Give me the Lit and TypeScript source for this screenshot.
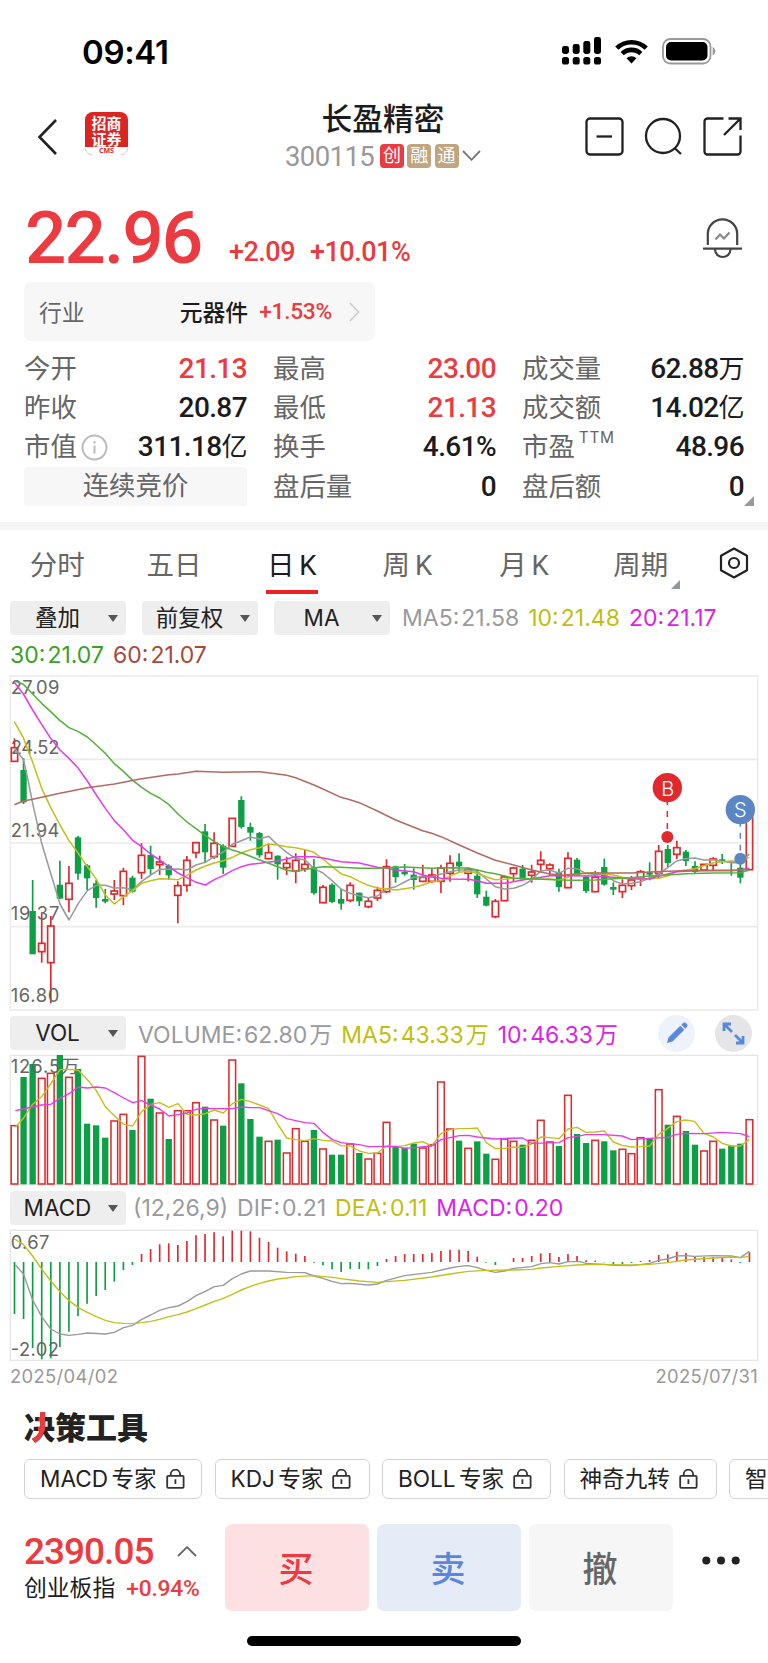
import { LitElement, html, svg, css } from "lit";
import { customElement } from "lit/decorators.js";
import { classMap } from "lit/directives/class-map.js";

// Chart geometry is kept in thirds of a CSS pixel.
const STEP = 27.22;
const X0 = 43.5;
const cx = (i: number) => X0 + STEP * i;

const RED = "#e0292c";
const GREEN = "#0d9f45";

// direction, body top, body bottom, high, low
type Candle = [string, number, number, number, number];
const candles: Candle[] = [
  ["R", 233, 274, 205, 274], ["G", 301, 396, 264, 402], ["G", 724, 852, 630, 852], ["R", 820, 845, 730, 878],
  ["R", 768, 878, 738, 1000], ["G", 645, 685, 572, 687], ["R", 640, 688, 588, 727], ["G", 503, 610, 498, 629],
  ["G", 587, 624, 583, 660], ["G", 641, 683, 630, 713], ["G", 688, 694, 657, 700], ["R", 663, 672, 630, 690],
  ["R", 604, 677, 593, 705], ["G", 624, 664, 617, 668], ["R", 556, 608, 520, 627], ["G", 556, 596, 527, 614],
  ["R", 576, 584, 557, 615], ["G", 588, 615, 583, 630], ["R", 647, 676, 634, 760], ["R", 571, 646, 558, 665],
  ["R", 518, 548, 518, 565], ["G", 485, 546, 462, 578], ["R", 520, 560, 487, 566], ["G", 528, 592, 523, 612],
  ["R", 445, 529, 445, 529], ["G", 391, 470, 379, 476], ["G", 472, 487, 458, 512], ["G", 490, 555, 486, 563],
  ["R", 548, 566, 520, 568], ["G", 558, 582, 556, 629], ["R", 580, 593, 560, 615], ["R", 571, 603, 550, 640],
  ["R", 583, 596, 537, 605], ["G", 594, 668, 567, 674], ["R", 652, 698, 645, 700], ["G", 645, 695, 640, 700],
  ["G", 688, 700, 657, 719], ["R", 646, 691, 637, 697], ["G", 669, 693, 668, 708], ["R", 694, 710, 684, 715],
  ["R", 661, 684, 650, 693], ["R", 590, 665, 568, 669], ["G", 590, 620, 587, 638], ["G", 606, 612, 582, 617],
  ["G", 615, 629, 595, 659], ["R", 622, 634, 584, 637], ["R", 615, 634, 595, 640], ["R", 594, 634, 584, 669],
  ["R", 580, 610, 556, 635], ["G", 576, 588, 550, 605], ["R", 598, 610, 593, 634], ["G", 618, 672, 598, 684],
  ["G", 681, 706, 662, 709], ["R", 694, 740, 687, 745], ["R", 621, 692, 616, 694], ["R", 594, 611, 590, 635],
  ["G", 597, 627, 585, 631], ["R", 606, 616, 584, 638], ["R", 571, 583, 544, 605], ["R", 585, 596, 580, 618],
  ["G", 607, 650, 596, 665], ["R", 565, 653, 547, 655], ["G", 570, 615, 564, 618], ["G", 621, 662, 618, 669],
  ["R", 622, 665, 603, 667], ["G", 592, 643, 566, 647], ["G", 652, 658, 637, 675], ["R", 646, 665, 628, 684],
  ["R", 630, 647, 618, 660], ["R", 605, 625, 600, 648], ["G", 608, 613, 577, 631], ["R", 544, 610, 525, 624],
  ["G", 538, 578, 525, 592], ["R", 533, 553, 512, 567], ["G", 546, 572, 540, 588], ["G", 589, 605, 574, 609],
  ["R", 583, 600, 583, 600], ["R", 567, 586, 562, 600], ["G", 569, 574, 552, 582], ["G", 574, 578, 572, 617],
  ["G", 594, 622, 566, 640], ["R", 420, 599, 416, 599],
];

const volumes = [
  347, 202, 163, 205, 190, 136, 202, 178, 342, 347, 384, 333, 313, 361, 139, 267, 309, 388, 302, 302, 278,
  291, 330, 348, 150, 221, 328, 381, 394, 390, 429, 356, 394, 361, 417, 435, 435, 402, 430, 447, 430, 337,
  411, 414, 402, 414, 404, 216, 357, 393, 415, 395, 432, 448, 387, 394, 405, 391, 331, 396, 409, 256, 373,
  400, 391, 395, 422, 418, 431, 383, 385, 239, 345, 319, 364, 405, 423, 394, 417, 408, 402, 329,
];

const macd = [
  387, 402, 489, 523, 520, 486, 440, 394, 356, 333, 315, 290, 255, 240, 207, 192, 178, 175, 180, 168, 151,
  147, 142, 154, 137, 137, 139, 158, 171, 188, 199, 206, 213, 233, 241, 253, 261, 252, 252, 253, 243, 222,
  213, 207, 207, 207, 204, 198, 194, 194, 198, 215, 233, 240, 231, 219, 219, 213, 205, 204, 216, 207, 213,
  226, 227, 232, 238, 237, 234, 228, 225, 210, 208, 200, 204, 213, 216, 216, 219, 223, 234, 202,
];

// volume direction per bar
const volDir =
  "RGGRRGRGGGGRRGRGRGRRRGRGRGGGRGRRRGRGGRGRRRGGGRRRRGRGGRRRGRRRGRGGRGGRRRGRGRGGRRGGGR";

const priceLines: [string, string][] = [
  ["#999a9e", "43,235 70,268 84,330 98,400 125,520 152,610 180,702 207,750 235,700 262,662 289,646 316,646 343,654 371,653 398,660 425,634 452,615 479,598 507,598 534,597 561,600 588,585 616,577 643,560 670,546 697,523 724,512 751,501 779,507 806,499 833,525 860,547 887,565 915,570 942,596 969,609 996,632 1023,657 1050,670 1078,677 1105,683 1132,678 1160,657 1187,650 1214,636 1241,622 1268,620 1295,620 1323,612 1350,605 1378,600 1405,600 1432,604 1459,627 1486,650 1514,657 1541,655 1568,646 1595,630 1623,602 1650,600 1677,610 1704,595 1731,596 1758,610 1786,614 1813,612 1840,632 1867,642 1894,640 1922,635 1949,624 1976,612 2003,593 2030,573 2057,566 2084,564 2112,570 2140,569 2167,574 2194,578 2221,578 2248,552"],
  ["#c3c01c", "43,155 70,203 98,277 125,355 152,412 180,465 207,512 235,550 262,590 289,628 316,675 343,702 371,680 398,662 425,640 452,632 479,626 507,627 534,629 561,616 588,600 616,588 643,579 670,572 697,562 724,549 751,539 779,533 806,522 833,525 860,530 887,533 915,539 942,547 969,567 996,590 1023,611 1050,620 1078,634 1105,646 1132,654 1160,657 1187,660 1214,656 1241,652 1268,645 1295,635 1323,632 1350,618 1378,607 1405,604 1432,610 1459,620 1486,629 1514,628 1541,624 1595,628 1650,627 1677,630 1704,622 1731,612 1758,608 1786,608 1813,612 1840,615 1867,622 1894,624 1922,627 1976,625 2003,618 2030,604 2084,596 2112,587 2140,578 2167,575 2194,573 2221,574 2248,562"],
  ["#e43cea", "43,37 70,72 98,120 125,163 152,205 180,240 207,265 235,295 262,333 289,375 316,415 343,452 371,480 398,511 425,530 452,552 479,570 507,590 534,609 561,623 588,637 616,645 643,629 670,617 697,602 724,590 751,583 779,580 833,573 860,567 887,560 942,560 969,564 1023,575 1078,579 1132,592 1160,595 1187,600 1241,605 1268,615 1295,621 1323,625 1350,627 1405,628 1432,632 1459,640 1514,640 1568,630 1623,622 1650,617 1704,617 1786,618 1840,622 1894,627 1949,626 1976,619 2003,612 2030,605 2084,602 2194,602 2221,600 2248,594"],
  ["#55b03c", "43,32 70,43 98,72 125,100 152,125 180,152 207,173 235,185 262,201 289,225 316,250 343,281 371,305 398,331 425,352 452,370 479,384 507,404 534,432 561,456 588,476 616,497 643,515 670,530 697,540 724,548 751,559 779,570 806,580 833,590 860,601 887,605 915,598 942,594 969,590 1023,592 1078,595 1132,595 1214,591 1295,595 1350,593 1405,594 1432,600 1459,607 1486,611 1514,618 1541,625 1595,626 1677,630 1731,631 1786,630 1840,626 1894,623 1949,618 2003,615 2057,611 2140,609 2221,608 2248,600"],
  ["#b36a60", "43,404 70,393 98,388 125,382 152,376 180,370 262,353 343,342 425,326 507,314 534,312 588,304 670,307 779,305 833,312 860,316 887,323 942,345 969,357 1023,382 1050,389 1078,398 1132,423 1187,450 1268,482 1295,490 1323,500 1378,525 1432,549 1486,571 1541,585 1595,600 1650,612 1690,616 1731,611 1786,609 1895,609 1949,606 2003,604 2057,602 2140,601 2194,601 2221,600 2248,598"],
];

const volLines: [string, string][] = [
  ["#c3c01c", "46,352 70,325 98,283 125,260 152,222 180,179 207,178 235,181 262,209 289,242 316,290 343,317 371,343 398,348 425,305 452,283 479,278 507,292 534,281 561,313 588,315 616,311 643,300 670,309 697,281 724,268 751,275 779,285 806,296 833,342 860,384 887,389 915,392 942,386 969,391 996,393 1023,407 1050,408 1078,423 1105,430 1132,429 1160,408 1187,410 1214,407 1241,399 1268,395 1295,408 1323,371 1350,359 1378,356 1405,356 1432,354 1459,398 1486,416 1514,415 1541,411 1568,412 1595,402 1623,381 1650,383 1677,386 1704,357 1731,352 1758,367 1786,366 1813,363 1840,396 1867,406 1894,411 1922,410 1949,408 1976,373 2003,355 2030,335 2057,330 2084,334 2112,370 2140,381 2167,400 2194,408 2221,408 2248,388"],
  ["#e43cea", "46,302 70,297 98,291 125,285 152,283 180,265 207,251 235,231 262,234 289,231 316,234 343,248 371,264 398,278 425,272 452,285 479,297 507,318 534,314 561,309 588,298 616,295 697,296 724,291 751,293 779,293 806,302 833,311 860,326 915,338 942,340 969,367 996,388 1023,398 1050,401 1078,404 1105,410 1160,409 1187,409 1214,415 1241,413 1295,408 1323,389 1350,383 1378,377 1405,376 1432,381 1486,387 1514,385 1568,384 1595,400 1677,398 1704,383 1731,379 1758,374 1813,374 1867,378 1894,389 1949,385 2003,382 2030,373 2057,370 2112,371 2167,367 2221,371 2248,380"],
];

const macdLines: [string, string][] = [
  ["#999a9e", "46,240 70,266 98,345 125,395 152,432 180,447 207,451 235,448 262,444 316,447 343,442 371,428 398,421 425,403 452,390 479,376 507,368 534,363 561,350 588,332 616,319 643,305 670,301 697,281 724,267 751,258 806,258 860,262 915,263 942,273 969,280 996,289 1023,296 1050,295 1105,300 1132,297 1160,286 1214,272 1295,262 1350,249 1378,244 1405,242 1432,248 1459,256 1486,262 1514,258 1541,250 1595,245 1623,236 1650,233 1677,237 1704,230 1740,230 1758,235 1813,238 1840,241 1894,242 1949,235 1976,226 2003,222 2030,213 2057,212 2084,214 2140,212 2194,213 2221,218 2248,199"],
  ["#c3c01c", "43,162 70,178 98,213 125,252 152,288 180,320 207,347 235,368 262,382 289,395 316,406 343,413 371,415 398,416 425,413 452,409 479,403 507,395 534,389 561,381 588,371 616,360 643,349 670,340 697,328 724,315 751,304 779,295 806,288 833,282 860,279 887,275 942,272 996,277 1023,281 1078,288 1132,292 1160,290 1214,286 1295,276 1350,267 1405,259 1459,256 1541,255 1595,253 1623,249 1677,244 1731,240 1786,238 1840,239 1894,240 1949,238 2003,233 2057,225 2140,219 2194,216 2221,218 2248,214"],
];

const curves = (lines: [string, string][]) =>
  lines.map(([c, p]) => svg`<polyline class="curve" points=${p} stroke=${c} />`);

@customElement("price-chart")
class PriceChart extends LitElement {
  static styles = css`
    :host { display: block; height: 340px; }
    svg { display: block; width: 768px; height: 340px; }
    .curve { fill: none; stroke-width: 4.6; stroke-linejoin: round; }
    .label { font: 400 55px Inter, sans-serif; fill: #666; }
    .pin { font: 300 60px Inter, sans-serif; fill: #fff; text-anchor: middle; }
  `;
  render() {
    return html`<svg viewBox="0 12 2304 1020">
      <g stroke="#ececec" stroke-width="5" fill="none">
        <path d="M31 268H2273M31 519H2273M31 770H2273" />
        <rect x="31" y="18" width="2242" height="1002" />
      </g>
      ${candles.map(([d, t, b, h, l], i) => {
        const x = cx(i);
        return d === "R"
          ? svg`<path d="M${x} ${h}V${t}M${x} ${b}V${l}" stroke=${RED} stroke-width="5" />
              <rect x=${x - 9.5} y=${t} width="19" height=${Math.max(4, b - t)} fill="none" stroke=${RED} stroke-width="5" />`
          : svg`<path d="M${x} ${h}V${l}" stroke=${GREEN} stroke-width="5" />
              <rect x=${x - 9.5} y=${t - 1} width="19" height=${b - t + 2} fill=${GREEN} />`;
      })}
      ${[["27.09", 72], ["24.52", 253], ["21.94", 501], ["19.37", 749], ["16.80", 995]].map(
        ([s, y]) => svg`<text class="label" x="32" y=${y} textLength="146">${s}</text>`
      )}
      ${curves(priceLines)}
      <path d="M2002 395V480" stroke=${RED} stroke-width="4.5" stroke-dasharray="18 18" stroke-dashoffset="8" />
      <circle cx="2002" cy="353" r="44" fill=${RED} />
      <circle cx="2002" cy="501" r="18" fill=${RED} />
      <text class="pin" x="2003" y="377">B</text>
      <path d="M2221 460V548" stroke="#5b86c4" stroke-width="4.5" stroke-dasharray="18 18" stroke-dashoffset="8" />
      <circle cx="2221" cy="419" r="44" fill="#5b86c4" />
      <circle cx="2221" cy="566" r="18" fill="#5b86c4" />
      <text class="pin" x="2221" y="440">S</text>
    </svg>`;
  }
}

@customElement("volume-chart")
class VolumeChart extends LitElement {
  static styles = css`
    :host { display: block; height: 134px; margin: 3px 0 4px; }
    svg { display: block; width: 768px; height: 134px; }
    .curve { fill: none; stroke-width: 4.2; stroke-linejoin: round; }
    .label { font: 400 55px Inter, "Noto Sans CJK SC", sans-serif; fill: #666; }
  `;
  render() {
    return html`<svg viewBox="0 129 2304 402">
      <rect x="31" y="136" width="2242" height="388" stroke="#e6e6e6" stroke-width="4" fill="none" />
      ${volumes.map((t, i) => {
        const x = cx(i);
        return candles[i][0] === "R"
          ? svg`<rect x=${x - 10} y=${t} width="20" height=${522 - t} fill="none" stroke=${RED} stroke-width="4.6" />`
          : svg`<rect x=${x - 9.5} y=${t - 1} width="19" height=${524 - t} fill=${GREEN} />`;
      })}
      <text class="label" x="32" y="190" textLength="206">126.5万</text>
      ${curves(volLines)}
    </svg>`;
  }
}

@customElement("macd-chart")
class MacdChart extends LitElement {
  static styles = css`
    :host { display: block; height: 134px; margin-top: 3px; }
    svg { display: block; width: 768px; height: 134px; }
    .curve { fill: none; stroke-width: 4.2; stroke-linejoin: round; }
    .label { font: 400 55px Inter, sans-serif; fill: #666; }
  `;
  render() {
    return html`<svg viewBox="0 129 2304 402">
      <rect x="31" y="136" width="2242" height="390" stroke="#e6e6e6" stroke-width="4" fill="none" />
      ${macd.map((v, i) => svg`<path d="M${cx(i)} 231V${v}" stroke=${v < 231 ? RED : GREEN} stroke-width="5" />`)}
      <text class="label" x="32" y="191" textLength="116">0.67</text>
      <text class="label" x="32" y="514" textLength="145">-2.02</text>
      ${curves(macdLines)}
    </svg>`;
  }
}

const lock = html`<svg class="lock" width="19" height="20" viewBox="0 0 19 20" fill="none" stroke="#333" stroke-width="1.8">
  <rect x="1.2" y="6.8" width="16.4" height="12" rx="1" />
  <path d="M4.7 6.5V5.4a4.7 4.7 0 0 1 9.4 0V6.5M9.4 10.3V15" />
</svg>`;

@customElement("app-root")
class AppRoot extends LitElement {
  static styles = css`
    :host {
      display: block; width: 768px; height: 1663px; overflow: hidden; background: #fff; color: #1c1c1e;
      font-family: Roboto, "Noto Sans CJK SC", sans-serif;
    }
    * { box-sizing: border-box; }
    svg { display: block; flex: none; }
    .page { display: flex; flex-direction: column; height: 1663px; white-space: nowrap; }
    .red { color: #eb3a40; }
    .status { height: 92px; display: flex; align-items: center; padding: 10px 51px 0 82px; justify-content: space-between; }
    .clock { font: 600 33px/40px Inter, sans-serif; color: #000; letter-spacing: -0.35px; padding-top: 1px; }
    .sysicons { display: flex; align-items: center; gap: 14px; }
    .nav { height: 97px; display: grid; grid-template-columns: 260px 246px 262px; }
    .nav-left { display: flex; gap: 28px; padding: 20px 0 0 37px; align-items: flex-start; }
    .back { margin-top: 7px; }
    .logo { width: 43px; height: 43px; border-radius: 8px; background: #da2522; overflow: hidden; display: flex; flex-direction: column; align-items: center; box-shadow: 0 0 1px #ccc; }
    .logo-text { font: 700 15px/15.5px "Noto Sans CJK SC", sans-serif; color: #fff; padding-top: 3px; height: 36px; width: 31px; text-align: center; white-space: normal; }
    .logo-cms { width: 100%; height: 8px; background: #fff; color: #da2522; font: 700 7px/7px "Open Sans", sans-serif; text-align: center; }
    .title { display: flex; flex-direction: column; align-items: center; padding-top: 6px; }
    .name { font: 500 30.7px/37px "Noto Sans CJK SC", sans-serif; height: 39px; }
    .code-row { display: flex; align-items: center; height: 37px; width: 196px; }
    .code { font-size: 27.5px; color: #999; letter-spacing: -0.6px; width: 95px; margin-top: 1px; }
    .tag { width: 24px; height: 24px; border-radius: 4px; background: #c0a57f; color: #fff; font-size: 18px; line-height: 23px; text-align: center; margin-right: 3.4px; }
    .tag.hot { background: #eb3a40; }
    .nav-right { display: flex; gap: 20px; padding: 25px 26px 0 0; justify-content: flex-end; align-items: flex-start; }
    .quote { height: 93px; display: flex; align-items: flex-end; padding: 0 26px 0 25px; }
    .price { font-size: 73px; font-weight: 500; line-height: 88px; letter-spacing: -2px; width: 204px; }
    .chg { font-size: 27px; font-weight: 500; line-height: 32px; letter-spacing: -0.5px; padding-bottom: 14px; }
    .chg + .chg { margin-left: 15px; }
    .bell { margin: 0 0 23px auto; }
    .industry { margin: 0 0 8px 24px; width: 351px; height: 59px; border-radius: 7px; background: #f7f7f7; display: flex; align-items: center; padding: 0 15px 0 15px; font-size: 22.8px; }
    .grey { color: #666; }
    .ind-name { margin-left: auto; font-weight: 500; }
    .ind-chg { margin: 0 17px 0 11px; font-weight: 500; letter-spacing: -0.3px; }
    .stats { height: 173px; padding: 0 24px; display: grid; grid-template-columns: 223px 223px 222px; column-gap: 26px; grid-template-rows: repeat(4, 39.3px); position: relative; }
    .cell { display: flex; justify-content: space-between; align-items: center; font-size: 26.4px; color: #666; line-height: 38px; }
    .val { font-size: 28px; font-weight: 500; color: #1c1c1e; letter-spacing: -0.6px; }
    .val.red { color: #eb3a40; }
    .unit { font-size: 26px; font-weight: 400; }
    .lbl { display: flex; align-items: center; }
    .info { margin-left: 4px; }
    .ttm { font: 400 15.5px/16px Inter, sans-serif; align-self: flex-start; margin: 2px 0 0 4px; letter-spacing: 0.6px; }
    .auction { background: #f7f7f7; border-radius: 4px; justify-content: center; padding-bottom: 2px; }
    .corner { width: 0; height: 0; border-left: 10px solid transparent; border-bottom: 10px solid #999; position: absolute; right: 14px; bottom: 16px; }
    .band { height: 8px; background: #f5f5f5; }
    .tabs { height: 71px; display: grid; grid-template-columns: repeat(6, 116.7px) 68px; align-items: stretch; }
    .tab { display: flex; align-items: center; justify-content: center; font-size: 27.5px; color: #666; position: relative; word-spacing: -2px; padding: 0 2px 5px 0; }
    .tab.on { color: #1c1c1e; padding-right: 0; }
    .tab.on::after { content: ""; position: absolute; bottom: 7px; width: 52px; height: 4px; background: #ed2024; }
    .tab.more::after { content: ""; position: absolute; left: 88px; bottom: 12px; border-left: 9px solid transparent; border-bottom: 9px solid #9296a0; }
    .hex { align-self: center; margin-left: 19px; margin-bottom: 6px; }
    .legend { height: 34px; flex: none; display: flex; align-items: center; padding-left: 10px; font-family: Inter, "Noto Sans CJK SC", sans-serif; font-size: 23px; word-spacing: -4.4px; }
    .legend.two { height: 39px; padding-left: 10px; }
    .legend.vol { margin-top: 2px; }
    .drop { width: 116px; height: 34px; border-radius: 4px; background: #eee; display: grid; grid-template-columns: 95px 21px; align-items: center; text-align: center; color: #222; font-size: 22.5px; line-height: 32px; }
    .drop + .drop { margin-left: 16px; }
    .arrow { border: 5px solid transparent; border-top: 7px solid #555; border-bottom: 0; width: 10px; margin-left: 3px; }
    .it { margin-left: 9px; }
    .drop + .it { margin-left: 12px; }
    .drop + .param { margin-left: 7px; }
    .ma5 { color: #999a9e; } .ma10 { color: #c0be10; } .ma20 { color: #dd22e6; } .ma30 { color: #3ba024; } .ma60 { color: #a44a3e; }
    .round { width: 37px; height: 37px; border-radius: 50%; display: flex; align-items: center; justify-content: center; background: #edf2fb; }
    .round.dark { background: #e5e5e7; margin-left: 20px; }
    .tools { margin-left: auto; margin-right: 16px; display: flex; }
    .dates { height: 28px; padding: 0 10px; display: flex; justify-content: space-between; align-items: center; font: 400 18.4px/20px Inter, sans-serif; color: #999; letter-spacing: 0.35px; }
    .heading { margin: 17px 0 14px 24px; width: 130px; height: 38px; font: 900 31px/38px "Noto Sans CJK SC", sans-serif; color: #222; position: relative; }
    .heading::after { content: "决"; color: #eb3a40; position: absolute; left: 0; top: 0; clip-path: polygon(15px 0, 21px 0, 21px 23px, 19px 27px, 14px 37px, 6px 37px, 6px 31px, 14px 25px); }
    .chips { height: 40px; flex: none; display: flex; padding-left: 24px; gap: 12.5px; overflow: hidden; }
    .chip { flex: none; height: 40px; border: 1.5px solid #d3d3d3; border-radius: 6px; display: flex; align-items: center; padding-left: 15px; gap: 9px; font: 400 22.6px/38px Inter, "Noto Sans CJK SC", sans-serif; color: #222; word-spacing: -3px; }
    .w1 { width: 178px; } .w2 { width: 155px; } .w3 { width: 169px; } .w4 { width: 153px; }
    .bottom { margin-top: 25px; height: 87px; flex: none; display: flex; padding-left: 24px; }
    .index { width: 201px; padding-top: 6px; }
    .idx-top { display: flex; align-items: center; height: 43px; }
    .idx { font-size: 37px; font-weight: 500; letter-spacing: -1px; width: 153px; }
    .idx-sub { font-size: 22.8px; line-height: 34px; margin-top: -1px; display: flex; }
    .idx-sub .red { font-weight: 500; margin-left: 11px; letter-spacing: -0.2px; }
    .act { width: 144px; height: 87px; border-radius: 7px; display: flex; align-items: center; justify-content: center; font-size: 35px; font-weight: 500; margin-right: 8px; padding: 0 2px 2px 0; }
    .buy { background: #fce0e2; color: #eb3a40; } .sell { background: #e5ecf8; color: #5a87dd; } .cancel { background: #f6f6f6; color: #666; }
    .dots { margin: 32px 0 0 21px; }
    .home { width: 274px; height: 10px; border-radius: 5px; background: #000; margin: 25px auto 0; }
  `;

  private stat(label: unknown, value: string, unit = "", up = false) {
    return html`<div class="cell"><span class="lbl">${label}</span>
      <span class=${classMap({ val: true, red: up })}>${value}${unit ? html`<span class="unit">${unit}</span>` : ""}</span></div>`;
  }
  private drop(text: string) {
    return html`<div class="drop"><span>${text}</span><i class="arrow"></i></div>`;
  }

  render() {
    return html`<div class="page">
      <div class="status">
        <span class="clock">09:41</span>
        <div class="sysicons">
          <svg width="39" height="28" viewBox="0 0 39 28">
            <rect x="0" y="9" width="7" height="8" rx="2.4"/><rect x="10.7" y="7" width="7" height="10" rx="2.4"/><rect x="21.3" y="4" width="7" height="13" rx="2.4"/><rect x="32" y="0" width="7" height="17" rx="2.4"/>
            <rect x="0" y="20" width="7" height="7.5" rx="2.6"/><rect x="10.7" y="20" width="7" height="7.5" rx="2.6"/><rect x="21.3" y="20" width="7" height="7.5" rx="2.6"/><rect x="32" y="20" width="7" height="7.5" rx="2.6"/>
          </svg>
          <svg width="33" height="25" viewBox="0 0 33 25" fill="none" stroke="#000" stroke-width="4.6">
            <path d="M1.8 9.2a21 21 0 0 1 29.4 0M7.2 14.7a13.3 13.3 0 0 1 18.6 0"/>
            <path d="M16.5 24.5l-5-5.3a7.4 7.4 0 0 1 10 0z" fill="#000" stroke="none"/>
          </svg>
          <svg width="55" height="27" viewBox="0 0 55 27">
            <rect x="1" y="1" width="47.5" height="24.5" rx="7.5" fill="none" stroke="#999" stroke-width="1.8"/>
            <rect x="4" y="4" width="41.5" height="18.5" rx="5" fill="#000"/>
            <path d="M50.7 9v8.5c3.4-1.5 3.4-7 0-8.5z" fill="#999"/>
          </svg>
        </div>
      </div>

      <div class="nav">
        <div class="nav-left">
          <svg class="back" width="20" height="36" viewBox="0 0 20 36" fill="none" stroke="#222" stroke-width="2.6"><path d="M19 1L2.5 18L19 35"/></svg>
          <div class="logo"><div class="logo-text">招商证券</div><div class="logo-cms">CMS</div></div>
        </div>
        <div class="title">
          <div class="name">长盈精密</div>
          <div class="code-row">
            <span class="code">300115</span><span class="tag hot">创</span><span class="tag">融</span><span class="tag">通</span>
            <svg width="19" height="11" viewBox="0 0 19 11" fill="none" stroke="#777" stroke-width="1.8"><path d="M1 1l8.5 8.8L18 1"/></svg>
          </div>
        </div>
        <div class="nav-right">
          <svg width="39" height="39" viewBox="0 0 39 39" fill="none" stroke="#222" stroke-width="2.3"><rect x="1.5" y="1.5" width="36" height="36" rx="3.5"/><path d="M11.5 19.5h15.5"/></svg>
          <svg width="39" height="39" viewBox="0 0 39 39" fill="none" stroke="#222" stroke-width="2.3"><circle cx="19" cy="19" r="17"/><path d="M30.5 31l6.5 6"/></svg>
          <svg width="39" height="39" viewBox="0 0 39 39" fill="none" stroke="#222" stroke-width="2.3"><path d="M20.5 1.5H4.5a3 3 0 0 0-3 3v30a3 3 0 0 0 3 3h30a3 3 0 0 0 3-3V18.5M25.5 1.5h12v11.5M37 2L21 18"/></svg>
        </div>
      </div>

      <div class="quote">
        <span class="price red">22.96</span>
        <span class="chg red">+2.09</span><span class="chg red">+10.01%</span>
        <svg class="bell" width="39" height="41" viewBox="0 0 39 41" fill="none" stroke="#444" stroke-width="2.2">
          <path d="M4.8 27V16a14.5 14.5 0 0 1 29.4 0V27M0 30.6h39M12 31.5c.5 10 15 10 15.5 0"/><path d="M12.5 21.500l4.500-5 4 4 5.500-6" stroke="#888"/>
        </svg>
      </div>

      <div class="industry">
        <span class="grey">行业</span><span class="ind-name">元器件</span><span class="ind-chg red">+1.53%</span>
        <svg width="11" height="20" viewBox="0 0 11 20" fill="none" stroke="#ccc" stroke-width="1.6"><path d="M1 1l8.5 9L1 19"/></svg>
      </div>

      <div class="stats">
        ${this.stat("今开", "21.13", "", true)}${this.stat("最高", "23.00", "", true)}${this.stat("成交量", "62.88", "万")}
        ${this.stat("昨收", "20.87")}${this.stat("最低", "21.13", "", true)}${this.stat("成交额", "14.02", "亿")}
        ${this.stat(html`市值<svg class="info" width="27" height="27" viewBox="0 0 27 27" fill="none" stroke="#bbb" stroke-width="2"><circle cx="13.5" cy="13.5" r="12"/><path d="M13.5 11.5v8M13.5 7v2.4"/></svg>`, "311.18", "亿")}
        ${this.stat("换手", "4.61%")}${this.stat(html`市盈<span class="ttm">TTM</span>`, "48.96")}
        <div class="cell auction">连续竞价</div>${this.stat("盘后量", "0")}${this.stat("盘后额", "0")}
        <i class="corner"></i>
      </div>

      <div class="band"></div>
      <div class="tabs">
        ${["分时", "五日", "日 K", "周 K", "月 K", "周期"].map(
          (t, i) => html`<div class=${classMap({ tab: true, on: i === 2, more: i === 5 })}>${t}</div>`
        )}
        <svg class="hex" width="30" height="32" viewBox="0 0 30 32" fill="none" stroke="#222" stroke-width="2.2"><path d="M15 1.5L28 8.8V23.2L15 30.5L2 23.2V8.8z" stroke-linejoin="round"/><circle cx="15" cy="16" r="5"/></svg>
      </div>

      <div class="legend">
        ${this.drop("叠加")}${this.drop("前复权")}${this.drop("MA")}
        <span class="it ma5">MA5: 21.58</span><span class="it ma10">10: 21.48</span><span class="it ma20">20: 21.17</span>
      </div>
      <div class="legend two"><span class="ma30">30: 21.07</span><span class="it ma60">60: 21.07</span></div>

      <price-chart></price-chart>

      <div class="legend vol">
        ${this.drop("VOL")}
        <span class="it ma5">VOLUME: 62.80 万</span><span class="it ma10">MA5: 43.33 万</span><span class="it ma20">10: 46.33 万</span>
        <div class="tools">
          <span class="round"><svg width="22" height="22" viewBox="0 0 22 22" fill="#5a87dd"><path d="M1 21l1.500-5.500L14.300 3.700l4 4L6.500 19.500zM15.300 2.700l1.200-1.200a2.800 2.800 0 0 1 4 4l-1.200 1.200z"/></svg></span>
          <span class="round dark"><svg width="23" height="23" viewBox="0 0 23 23" fill="none" stroke="#5a87dd" stroke-width="2.8"><path d="M10 10L3 3M2 9V2H9M13 13l7 7M21 14v7H14"/></svg></span>
        </div>
      </div>
      <volume-chart></volume-chart>
      <div class="legend">
        ${this.drop("MACD")}
        <span class="it param ma5">(12,26,9)</span><span class="it ma5">DIF: 0.21</span><span class="it ma10">DEA: 0.11</span><span class="it ma20">MACD: 0.20</span>
      </div>
      <macd-chart></macd-chart>
      <div class="dates"><span>2025/04/02</span><span>2025/07/31</span></div>

      <div class="heading">决策工具</div>
      <div class="chips">
        <div class="chip w1">MACD 专家 ${lock}</div>
        <div class="chip w2">KDJ 专家 ${lock}</div>
        <div class="chip w3">BOLL 专家 ${lock}</div>
        <div class="chip w4">神奇九转 ${lock}</div>
        <div class="chip w4">智</div>
      </div>

      <div class="bottom">
        <div class="index">
          <div class="idx-top"><span class="idx red">2390.05</span>
            <svg width="20" height="11" viewBox="0 0 20 11" fill="none" stroke="#666" stroke-width="1.8"><path d="M1 10l9-8.800L19 10"/></svg></div>
          <div class="idx-sub"><span>创业板指</span><span class="red">+0.94%</span></div>
        </div>
        <div class="act buy">买</div><div class="act sell">卖</div><div class="act cancel">撤</div>
        <svg class="dots" width="38" height="9" viewBox="0 0 38 9" fill="#222"><circle cx="4.3" cy="4.5" r="4"/><circle cx="19" cy="4.5" r="4"/><circle cx="33.7" cy="4.5" r="4"/></svg>
      </div>
      <div class="home"></div>
    </div>`;
  }
}
